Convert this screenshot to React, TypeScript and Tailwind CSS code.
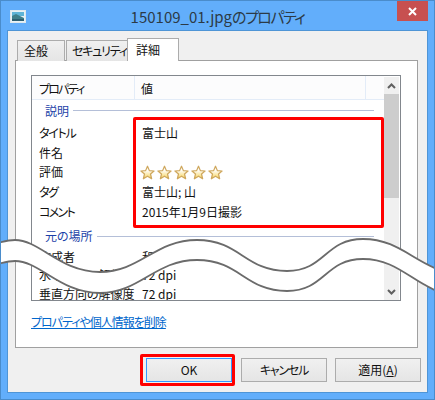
const jp = "[font-family:'Noto_Sans_CJK_JP','Noto_Sans',sans-serif] [font-feature-settings:'palt']";

function Star() {
    return (
        <svg width="15" height="15" viewBox="0 0 24 24" className="flex-shrink-0">
            <defs>
                <linearGradient id="starfill" x1="0" y1="0" x2="0" y2="1">
                    <stop offset="0.3" stopColor="#ffffff"/>
                    <stop offset="1" stopColor="#f7d356"/>
                </linearGradient>
            </defs>
            <path
                d="M12 2 L15 9 L22.5 9.6 L16.8 14.4 L18.6 22 L12 18 L5.4 22 L7.2 14.4 L1.5 9.6 L9 9 Z"
                fill="url(#starfill)"
                stroke="#cfa85e"
                strokeWidth="2"
                strokeLinejoin="round"
            />
        </svg>
    );
}

interface RowProps {
    label: string
    value?: string
    labelClass?: string
    compact?: boolean
    children?: React.ReactNode
}

function Row({ label, value, labelClass = "", compact, children }: RowProps) {
    return (
        <div className={`flex items-center ${compact ? "h-[18.5px]" : "h-[19.7px]"}`}>
            <div className={`w-[110px] pl-[7px] flex-shrink-0 whitespace-nowrap ${labelClass}`}>{label}</div>
            <div className="whitespace-nowrap">{value}{children}</div>
        </div>
    );
}

function Section({ label, className }: { label: string; className: string }) {
    return (
        <div className={`flex items-center pl-[13px] pr-[10px] gap-[4px] text-[#1c3fa8] ${className}`}>
            <span className="whitespace-nowrap">{label}</span>
            <div className="flex-1 h-px bg-[#b4bfd8]"></div>
        </div>
    );
}

function DialogButton({ label, className = "" }: { label: React.ReactNode; className?: string }) {
    return (
        <button className={`w-[86px] h-[24px] border bg-gradient-to-b from-[#f0f0f0] to-[#e5e5e5] text-[12px] text-[#111] ${className}`}>
            {label}
        </button>
    );
}

export default function App() {
    return (
        <div className={`relative w-[435px] h-[400px] overflow-hidden bg-[#62aefb] border border-[#4a8ccb] text-[12px] leading-none text-[#111] ${jp}`}>

            {/*==========Title bar===================================================*/}
            <div className="relative flex items-center justify-center h-[29px] text-[15px] text-[#2c3a46]">
                <svg width="16" height="13" viewBox="0 0 16 13" className="absolute left-[9px] top-[9px]">
                    <rect x="0.5" y="0.5" width="15" height="12" fill="#e8f2f6" stroke="#dfe8ec"/>
                    <rect x="2" y="2" width="12" height="4" fill="#5fb4d6"/>
                    <path d="M2 6 L6 4 L14 8 V11 H2 Z" fill="#3f7f8a"/>
                    <rect x="2" y="9" width="12" height="2" fill="#2d5f70"/>
                </svg>
                <span className="mt-[2px]">150109_01.jpg<span className="tracking-[-1.5px]">のプロパティ</span></span>
                <div className="absolute right-[6px] top-0 w-[31px] h-[20px] bg-[#c75050] flex items-center justify-center">
                    <svg width="9" height="9" viewBox="0 0 9 9">
                        <path d="M1 1 L8 8 M8 1 L1 8" stroke="#ffffff" strokeWidth="2"/>
                    </svg>
                </div>
            </div>

            {/*==========Client area=================================================*/}
            <div className="ml-[6px] mr-[6px] h-[363px] border border-[#4f95d6] bg-[#f0f0f0] pl-[7px] pr-[6px] pt-[7px]">

                {/*Tabs*/}
                <div className="relative flex items-end h-[23px] pl-[2px] -mb-px">
                    <div className="w-[48px] h-[21px] flex items-center pl-[6px] border border-b-0 border-[#acacac] bg-gradient-to-b from-[#f0f0f0] to-[#e5e5e5]">全般</div>
                    <div className="w-[62px] h-[21px] flex items-center pl-[5px] ml-[1px] border border-b-0 border-[#acacac] bg-gradient-to-b from-[#f0f0f0] to-[#e5e5e5] whitespace-nowrap tracking-[-1.2px]">セキュリティ</div>
                    <div className="relative z-10 w-[52px] h-[23px] -ml-px flex items-center pl-[8px] border border-b-0 border-[#acacac] bg-white">詳細</div>
                </div>

                {/*Panel*/}
                <div className="h-[288px] mr-[3px] border border-[#a0a0a0] bg-white pl-[15px] pr-[16px] pt-[14px]">
                    <div className="flex h-[226px] border border-[#82878d] overflow-hidden">
                        <div className="flex-1 min-w-0">
                            {/*Header*/}
                            <div className="flex items-center h-[24px] bg-[#fcfcfd] border-b border-[#e3ecf8]">
                                <div className="w-[103px] h-full flex items-center pl-[7px] pt-[2px] border-r border-[#e3ecf8] tracking-[-1.8px]">プロパティ</div>
                                <div className="w-[231px] h-full flex items-center pl-[6px] pt-[2px] border-r border-[#e3ecf8]">値</div>
                            </div>

                            <Section label="説明" className="h-[21px]"/>
                            <div className="mt-[2px]">
                                <Row label="タイトル" labelClass="tracking-[-1.2px]" value="富士山"/>
                                <Row label="件名"/>
                                <Row label="評価">
                                    <div className="flex gap-[2px] -ml-[2px]">
                                        <Star/><Star/><Star/><Star/><Star/>
                                    </div>
                                </Row>
                                <Row label="タグ" labelClass="tracking-[-1.5px]" value="富士山; 山"/>
                                <Row label="コメント" labelClass="tracking-[-1.7px]" value="2015年1月9日撮影"/>
                            </div>

                            <Section label="元の場所" className="h-[22px] mt-[4px]"/>
                            <div>
                                <Row compact label="作成者" value="和"/>
                                <Row compact label="水平方向の解像度" value="72 dpi"/>
                                <Row compact label="垂直方向の解像度" value="72 dpi"/>
                            </div>
                        </div>

                        {/*Scrollbar*/}
                        <div className="w-[15px] mr-[1px] mt-px flex flex-col bg-[#f0f0f0]">
                            <div className="h-[17px] flex items-center justify-center">
                                <svg width="9" height="6" viewBox="0 0 9 6"><path d="M1 5 L4.5 1.5 L8 5" fill="none" stroke="#606060" strokeWidth="2"/></svg>
                            </div>
                            <div className="h-[104px] bg-[#cdcdcd]"></div>
                            <div className="flex-1"></div>
                            <div className="h-[17px] flex items-center justify-center">
                                <svg width="9" height="6" viewBox="0 0 9 6"><path d="M1 1 L4.5 4.5 L8 1" fill="none" stroke="#606060" strokeWidth="2"/></svg>
                            </div>
                        </div>
                    </div>

                    <div className="mt-[15px] text-[#0066cc] underline whitespace-nowrap tracking-[-1px]">プロパティや個人情報を削除</div>
                </div>

                {/*Buttons*/}
                <div className="flex justify-end gap-[8px] pt-[10px]">
                    <DialogButton label="OK" className="border-[#3399ff] mr-px"/>
                    <DialogButton label={<span className="tracking-[-1.2px]">キャンセル</span>} className="border-[#acacac]"/>
                    <DialogButton label={<span>適用(<span className="underline">A</span>)</span>} className="border-[#acacac]"/>
                </div>
            </div>

            {/*==========Red highlights==============================================*/}
            <div className="absolute left-[132px] top-[116px] w-[251px] h-[111px] border-[3px] border-[#ff0000] rounded-[2px]"></div>
            <div className="absolute left-[139px] top-[353px] w-[95px] h-[32px] border-[3px] border-[#ff0000] rounded-[2px]"></div>

            {/*==========Cut-away wave===============================================*/}
            <svg width="435" height="400" viewBox="0 0 435 400" className="absolute -left-px -top-px pointer-events-none">
                <path
                    d="M-2 243 C5 241 10 240 15 240 C40 240 60 272 100 272 C140 272 155 240 197 240 C240 240 245 271 287 271 C325 271 325 239 363 239 C395 239 410 258 437 269 L437 291 C410 280 395 259 363 259 C325 259 325 291 287 291 C245 291 240 260 197 260 C155 260 140 293 100 293 C60 293 40 261 15 261 C10 261 5 262 -2 264 Z"
                    fill="#ffffff"
                />
                <path
                    d="M-2 243 C5 241 10 240 15 240 C40 240 60 272 100 272 C140 272 155 240 197 240 C240 240 245 271 287 271 C325 271 325 239 363 239 C395 239 410 258 437 269"
                    fill="none"
                    stroke="#6b6b6b"
                    strokeWidth="1.8"
                />
                <path
                    d="M-2 264 C5 262 10 261 15 261 C40 261 60 293 100 293 C140 293 155 260 197 260 C240 260 245 291 287 291 C325 291 325 259 363 259 C395 259 410 280 437 291"
                    fill="none"
                    stroke="#6b6b6b"
                    strokeWidth="1.8"
                />
            </svg>
        </div>
    );
}
